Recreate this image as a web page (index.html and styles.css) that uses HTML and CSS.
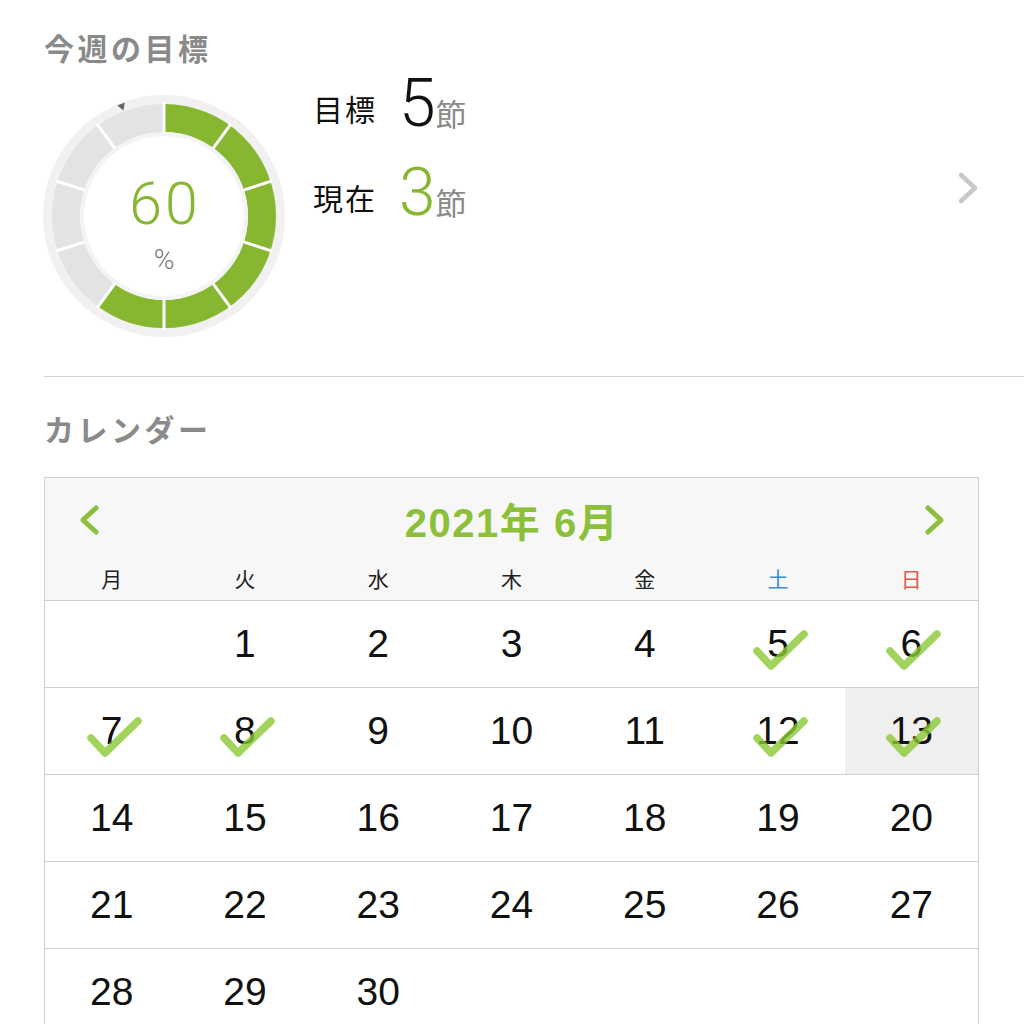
FILE: index.html
```html
<!DOCTYPE html>
<html lang="ja">
<head>
<meta charset="utf-8">
<title>今週の目標</title>
<link rel="stylesheet" href="styles.css">
</head>
<body>
<main class="page">
  <section class="goal">
    <h2 class="section-title">今週の目標</h2>
    <div class="goal-body">
      <svg class="donut" viewBox="-121 -121 242 242" width="242" height="242">
        <circle r="121" class="ring-bg"/>
        <circle r="98" class="band-bg"/>
        <circle r="98" class="band-fill" stroke-dasharray="369.45 615.75" transform="rotate(-90)"/>
        <g class="seps">
          <line y1="-82" y2="-114"/>
          <line y1="-82" y2="-114" transform="rotate(36)"/>
          <line y1="-82" y2="-114" transform="rotate(72)"/>
          <line y1="-82" y2="-114" transform="rotate(108)"/>
          <line y1="-82" y2="-114" transform="rotate(144)"/>
          <line y1="-82" y2="-114" transform="rotate(180)"/>
          <line y1="-82" y2="-114" transform="rotate(216)"/>
          <line y1="-82" y2="-114" transform="rotate(252)"/>
          <line y1="-82" y2="-114" transform="rotate(288)"/>
          <line y1="-82" y2="-114" transform="rotate(324)"/>
        </g>
        <circle r="84" class="inner-ring"/>
        <circle r="80" class="inner-core"/>
        <polygon class="marker" points="-4,-120 4,-120 0,-113" transform="rotate(-21)"/>
        <text class="pct-num" x="1" y="8">60</text>
        <text class="pct-sign" x="0" y="53">%</text>
      </svg>
      <div class="stats">
        <div class="stat-row">
          <span class="stat-label">目標</span>
          <span class="stat-value"><span class="num">5</span><span class="unit">節</span></span>
        </div>
        <div class="stat-row">
          <span class="stat-label">現在</span>
          <span class="stat-value"><span class="num num-green">3</span><span class="unit">節</span></span>
        </div>
      </div>
      <svg class="more" width="22" height="34" viewBox="0 0 22 34">
        <path d="M4 4 L18 17 L4 30"/>
      </svg>
    </div>
  </section>

  <hr class="divider">

  <section class="cal-section">
    <h2 class="section-title">カレンダー</h2>
    <div class="calendar">
      <div class="cal-head">
        <div class="cal-nav">
          <svg class="nav-arrow" width="26" height="32" viewBox="0 0 26 32"><path d="M20 4 L7 16 L20 28"/></svg>
          <span class="cal-title">2021年 6月</span>
          <svg class="nav-arrow" width="26" height="32" viewBox="0 0 26 32"><path d="M6 4 L19 16 L6 28"/></svg>
        </div>
        <div class="weekdays">
          <span>月</span><span>火</span><span>水</span><span>木</span><span>金</span><span class="sat">土</span><span class="sun">日</span>
        </div>
      </div>
      <div class="cal-body">
        <div class="week">
          <div class="day"></div>
          <div class="day">1</div>
          <div class="day">2</div>
          <div class="day">3</div>
          <div class="day">4</div>
          <div class="day">5<svg class="check" viewBox="-30 -30 60 60"><polyline points="-21,7 -7,22 26,-10"/></svg></div>
          <div class="day">6<svg class="check" viewBox="-30 -30 60 60"><polyline points="-21,7 -7,22 26,-10"/></svg></div>
        </div>
        <div class="week">
          <div class="day">7<svg class="check" viewBox="-30 -30 60 60"><polyline points="-21,7 -7,22 26,-10"/></svg></div>
          <div class="day">8<svg class="check" viewBox="-30 -30 60 60"><polyline points="-21,7 -7,22 26,-10"/></svg></div>
          <div class="day">9</div>
          <div class="day">10</div>
          <div class="day">11</div>
          <div class="day">12<svg class="check" viewBox="-30 -30 60 60"><polyline points="-21,7 -7,22 26,-10"/></svg></div>
          <div class="day today">13<svg class="check" viewBox="-30 -30 60 60"><polyline points="-21,7 -7,22 26,-10"/></svg></div>
        </div>
        <div class="week">
          <div class="day">14</div>
          <div class="day">15</div>
          <div class="day">16</div>
          <div class="day">17</div>
          <div class="day">18</div>
          <div class="day">19</div>
          <div class="day">20</div>
        </div>
        <div class="week">
          <div class="day">21</div>
          <div class="day">22</div>
          <div class="day">23</div>
          <div class="day">24</div>
          <div class="day">25</div>
          <div class="day">26</div>
          <div class="day">27</div>
        </div>
        <div class="week">
          <div class="day">28</div>
          <div class="day">29</div>
          <div class="day">30</div>
          <div class="day"></div>
          <div class="day"></div>
          <div class="day"></div>
          <div class="day"></div>
        </div>
      </div>
    </div>
  </section>
</main>
</body>
</html>
```

FILE: styles.css
```css
* {
  box-sizing: border-box;
  margin: 0;
  padding: 0;
}

html, body {
  height: 100%;
  overflow: hidden;
}

body {
  background: #ffffff;
  font-family: "Noto Sans CJK JP", sans-serif;
  color: #111111;
}

.page {
  padding: 29px 0 0 44px;
}

.goal,
.cal-section {
  padding-right: 45px;
}

.section-title {
  font-size: 30px;
  line-height: 36px;
  font-weight: 700;
  color: #8a8a8a;
  letter-spacing: 3.5px;
}

/* ---------- goal ---------- */
.goal-body {
  display: flex;
  align-items: flex-start;
  margin-top: 11px;
}

.donut {
  flex: none;
  margin-top: 19px;
  margin-left: -1px;
}

.ring-bg { fill: #f1f1f1; }
.band-bg { fill: none; stroke: #e3e3e3; stroke-width: 28; }
.band-fill { fill: none; stroke: #87b631; stroke-width: 28; }
.seps line { stroke: #ffffff; stroke-width: 3; }
.inner-ring { fill: #f4f4f4; }
.inner-core { fill: #ffffff; }
.marker { fill: #666666; }

.pct-num {
  font-family: Roboto, "Liberation Sans", sans-serif;
  font-weight: 300;
  font-size: 59px;
  letter-spacing: 3px;
  fill: #87b631;
  text-anchor: middle;
}

.pct-sign {
  font-family: Roboto, "Liberation Sans", sans-serif;
  font-weight: 300;
  font-size: 28px;
  fill: #777777;
  text-anchor: middle;
}

.stats {
  display: flex;
  flex-direction: column;
  gap: 25px;
  margin-left: 28px;
}

.stat-row {
  display: flex;
  align-items: center;
  height: 64px;
}

.stat-label {
  font-size: 30px;
  letter-spacing: 2px;
  margin-right: 22px;
  color: #111111;
}

.stat-value {
  display: flex;
  align-items: baseline;
  line-height: 64px;
}

.num {
  font-family: Roboto, "Liberation Sans", sans-serif;
  font-weight: 300;
  font-size: 66px;
  color: #111111;
}

.num-green {
  color: #87b631;
}

.unit {
  font-size: 31px;
  color: #8a8a8a;
}

.more {
  flex: none;
  margin-left: auto;
  margin-top: 95px;
}

.more path {
  fill: none;
  stroke: #c8c8c8;
  stroke-width: 4.5;
  stroke-linecap: round;
  stroke-linejoin: round;
}

.divider {
  border: 0;
  border-top: 1px solid #d2d2d2;
  margin: 39px 0 33px;
}

/* ---------- calendar ---------- */
.calendar {
  margin-top: 31px;
  border: 1px solid #cfcfcf;
  border-bottom: none;
}

.cal-head {
  background: #f7f7f7;
  border-bottom: 1px solid #cfcfcf;
}

.cal-nav {
  display: flex;
  align-items: center;
  justify-content: space-between;
  height: 84px;
  padding: 0 30px 0 31px;
}

.nav-arrow path {
  fill: none;
  stroke: #8cc03c;
  stroke-width: 5;
  stroke-linecap: round;
  stroke-linejoin: round;
}

.cal-title {
  font-family: "Liberation Sans", "Noto Sans CJK JP", sans-serif;
  font-weight: 700;
  font-size: 40px;
  letter-spacing: 1.5px;
  color: #8cbf3a;
}

.weekdays {
  display: grid;
  grid-template-columns: repeat(7, 1fr);
  height: 38px;
  line-height: 32px;
  font-size: 21px;
  text-align: center;
  color: #222222;
}

.sat { color: #3b8ed6; }
.sun { color: #e65a4c; }

.week {
  display: grid;
  grid-template-columns: repeat(7, 1fr);
  height: 87px;
  border-bottom: 1px solid #d0d0d0;
}

.day {
  position: relative;
  display: flex;
  align-items: center;
  justify-content: center;
  font-family: "Liberation Sans", sans-serif;
  font-size: 39px;
  color: #111111;
}

.today {
  background: #efefef;
}

.check {
  position: absolute;
  left: 50%;
  top: 50%;
  width: 60px;
  height: 60px;
  margin: -30px 0 0 -30px;
}

.check polyline {
  fill: none;
  stroke: rgba(138, 200, 52, 0.8);
  stroke-width: 7.5;
  stroke-linecap: round;
  stroke-linejoin: round;
}
```
